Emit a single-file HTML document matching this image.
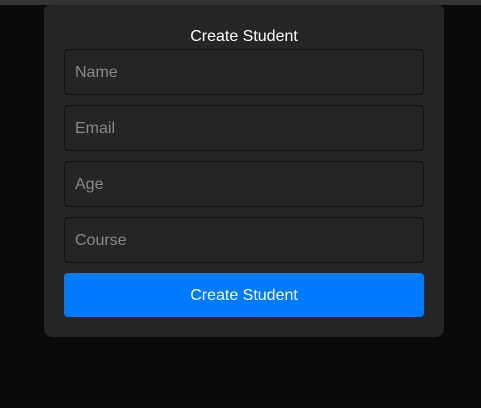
<!DOCTYPE html>
<html><head><style>
html,body{margin:0;padding:0;width:481px;height:408px;background:#0a0a0a;overflow:hidden;font-family:"Liberation Sans",Arial,sans-serif}
.top{position:absolute;left:0;top:0;width:481px;height:5px;background:#333}
.card{position:absolute;left:44px;top:5px;width:400px;height:332px;background:#262524;border-radius:6px 6px 8px 8px}
.t{position:absolute;left:0;width:400px;top:23px;text-align:center;color:#fff;font-size:16px}
.in{position:absolute;left:20px;border:1px solid #121212;border-radius:5px;background:#262524;color:#8a8a8a;font-size:16px;line-height:46px;padding-left:10px;box-sizing:border-box;width:360px;height:46px}
.btn{position:absolute;left:20px;top:268px;width:360px;height:44px;background:#007bff;border-radius:4px;color:#fff;font-size:16px;text-align:center;line-height:45px}
</style></head><body>
<div class="top"></div>
<div class="card">
<div class="t">Create Student</div>
<div class="in" style="top:44px">Name</div>
<div class="in" style="top:100px">Email</div>
<div class="in" style="top:156px">Age</div>
<div class="in" style="top:212px">Course</div>
<div class="btn">Create Student</div>
</div>
</body></html>
